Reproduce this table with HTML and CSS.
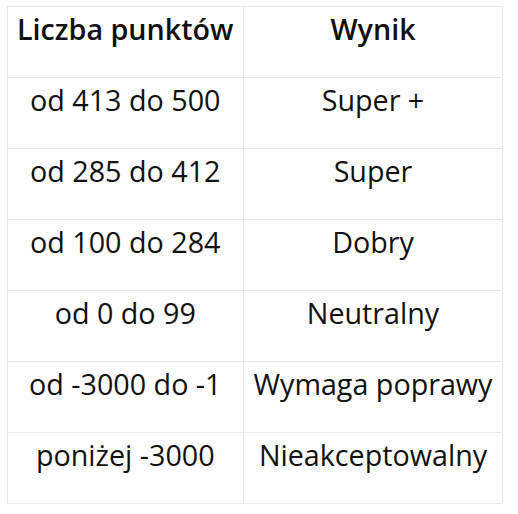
FILE: index.html
```html
<!DOCTYPE html>
<html lang="pl">
<head>
<meta charset="utf-8">
<link rel="stylesheet" href="styles.css">
</head>
<body>
<table class="score-table">
  <thead>
    <tr><th><p>Liczba punktów</p></th><th><p>Wynik</p></th></tr>
  </thead>
  <tbody>
    <tr><td><p>od 413 do 500</p></td><td><p>Super +</p></td></tr>
    <tr><td><p>od 285 do 412</p></td><td><p>Super</p></td></tr>
    <tr><td><p>od 100 do 284</p></td><td><p>Dobry</p></td></tr>
    <tr><td><p>od 0 do 99</p></td><td><p>Neutralny</p></td></tr>
    <tr><td><p>od -3000 do -1</p></td><td><p>Wymaga poprawy</p></td></tr>
    <tr><td><p>poniżej -3000</p></td><td><p>Nieakceptowalny</p></td></tr>
  </tbody>
</table>
</body>
</html>
```
FILE: styles.css
```css
body {
  margin: 0;
  background: #fff;
  font-family: "Open Sans", "DejaVu Sans", sans-serif;
  color: #111;
}
.score-table {
  border-collapse: collapse;
  font-size: 28.7px;
  margin: 6px 0 0 7px;
}
.score-table th,
.score-table td {
  border: 1px solid #e8e8e8;
  padding: 2px 10px 0;
  text-align: center;
  vertical-align: top;
}
.score-table th:first-child,
.score-table td:first-child {
  padding-left: 9px;
  padding-right: 9px;
}
.score-table th { font-weight: 600; }
.score-table p {
  margin: 0 0 28px;
  line-height: 40px;
}
```
